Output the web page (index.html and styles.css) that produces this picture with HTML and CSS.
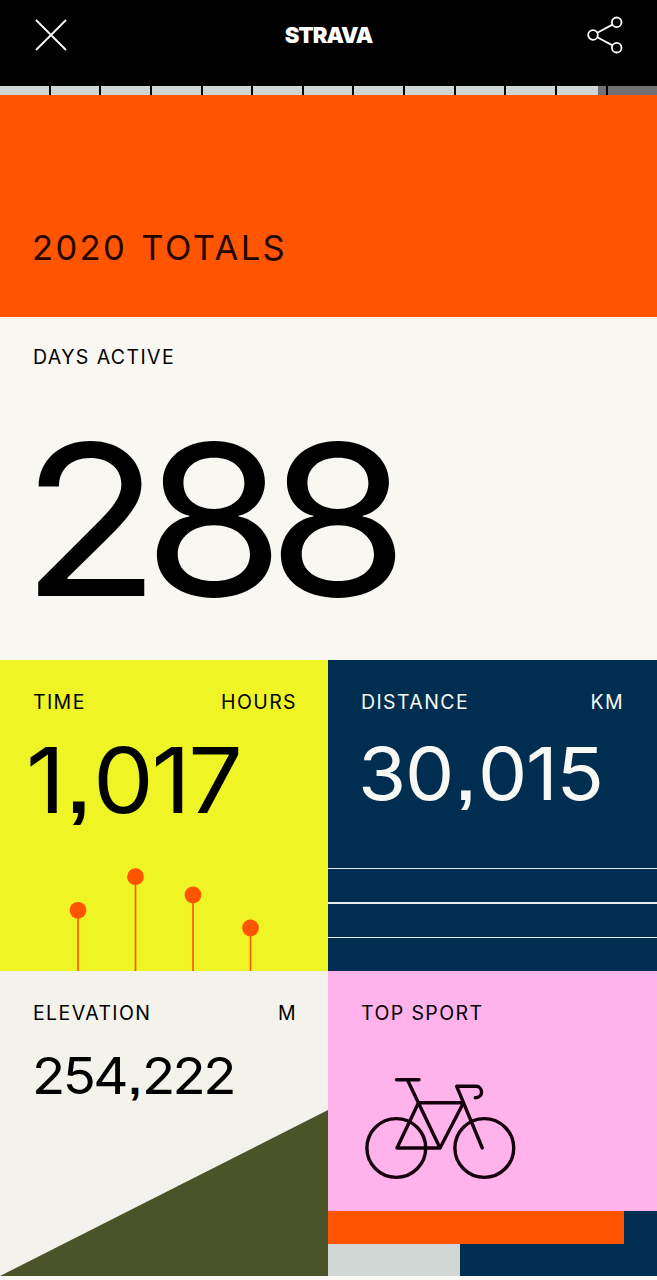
FILE: index.html
```html
<!DOCTYPE html>
<html lang="en">
	<head>
		<meta charset="utf-8">
		<title>2020 Totals</title>
		<link rel="stylesheet" href="styles.css">
	</head>
	<body>
		<header>
			<svg class="close" width="32" height="32" viewBox="0 0 32 32">
				<path d="M1 1L31 31M31 1L1 31" />
			</svg>
			<div class="logo">STRAVA</div>
			<svg class="share" width="38" height="38" viewBox="0 0 38 38">
				<circle cx="7" cy="19" r="4.8" />
				<circle cx="30.7" cy="6.3" r="4.8" />
				<circle cx="30.7" cy="31.7" r="4.8" />
				<path d="M11.3 16.7L26.5 8.6M11.3 21.3L26.5 29.4" />
			</svg>
		</header>
		<div class="progress">
			<i></i><i></i><i></i><i></i><i></i><i></i><i></i><i></i><i></i><i></i><i></i><i class="current"></i><i class="todo"></i>
		</div>
		<section class="title">
			<h1>2020 TOTALS</h1>
		</section>
		<section class="days">
			<div class="label"><span>DAYS ACTIVE</span></div>
			<div class="value">288</div>
		</section>
		<main>
			<section class="time">
				<div class="label"><span>TIME</span><span>HOURS</span></div>
				<div class="value">1<b>,</b>017</div>
				<svg class="pins" width="328" height="111" viewBox="0 0 328 111">
					<path d="M78 50V111M135.5 17V111M193 35V111M250.5 68V111" />
					<circle cx="78" cy="50.3" r="8.4" />
					<circle cx="135.5" cy="16.7" r="8.4" />
					<circle cx="193" cy="35" r="8.4" />
					<circle cx="250.5" cy="68" r="8.4" />
				</svg>
			</section>
			<section class="distance">
				<div class="label"><span>DISTANCE</span><span>KM</span></div>
				<div class="value">30<b>,</b>015</div>
				<div class="lanes"><i></i><i></i><i></i></div>
			</section>
			<section class="elevation">
				<div class="label"><span>ELEVATION</span><span>M</span></div>
				<div class="value">254<b>,</b>222</div>
				<div class="hill"></div>
			</section>
			<section class="sport">
				<div class="label"><span>TOP SPORT</span></div>
				<svg class="bike" width="156" height="106" viewBox="362 1075 156 106">
					<circle cx="396.3" cy="1148" r="29.4" />
					<circle cx="484.3" cy="1148" r="29.4" />
					<path d="M396.5 1079.8H419M407.5 1080L440 1148H397L418.5 1102.7H463.5L440 1148" />
					<path d="M482.3 1148L456.7 1086.3H476C483 1086.3 484 1097.5 475.3 1097.7" />
				</svg>
				<div class="bars">
					<div class="bar first"></div>
					<div class="bar second"></div>
				</div>
			</section>
		</main>
	</body>
</html>
```
FILE: styles.css
```css
body {
	margin: 0;
	height: 1280px;
	overflow: hidden;
	background: #fcfaf6;
	color: #000;
	font-family: Inter, "Liberation Sans", sans-serif;
	line-height: 1;
}
section {
	box-sizing: border-box;
	overflow: hidden;
}
svg {
	display: block;
	fill: none;
}
header {
	height: 86px;
	box-sizing: border-box;
	padding: 16px 33px 0 35px;
	display: flex;
	justify-content: space-between;
	background: #000;
	color: #fff;
}
.close,
.share {
	stroke: #fff;
	stroke-width: 1.8;
}
.close {
	margin-top: 3px;
}
.logo {
	margin: 8px 0 0 4px;
	font-size: 22px;
	font-weight: 900;
	letter-spacing: -0.9px;
}
.progress {
	height: 9px;
	display: flex;
	gap: 2px;
	background: #000;
}
.progress i {
	flex: 1;
	background: #d0d6d4;
}
.progress .current {
	background: linear-gradient(to right, #d0d6d4 83%, #727075 83%);
}
.progress .todo {
	flex: 0 0 49.4px;
	background: #727075;
}
.title {
	height: 222px;
	padding: 136px 33px 0 32px;
	background: #ff5400;
	color: #240600;
}
h1 {
	margin: 0;
	font-size: 34.5px;
	font-weight: 400;
	line-height: 1;
	letter-spacing: 2.4px;
	word-spacing: 2px;
}
.label {
	display: flex;
	justify-content: space-between;
	font-size: 19.5px;
	letter-spacing: 1.4px;
}
.value {
	transform-origin: 0 0;
	white-space: nowrap;
}
.value b {
	margin: 0 0.065em 0 0.055em;
	font-family: "Liberation Sans", sans-serif;
	font-size: 0.85em;
	line-height: 0;
}
.days {
	height: 343px;
	padding: 31px 33px 0;
	background: #f8f7f2;
}
.days .value {
	margin: 47px 0 0 -12px;
	font-size: 210px;
	letter-spacing: -16px;
	transform: scaleX(1.09);
}
main {
	display: grid;
	grid-template-columns: 328px 1fr;
	grid-template-rows: 311px 305px;
}
main section {
	display: flex;
	flex-direction: column;
	padding-top: 33px;
}
main .label {
	padding: 0 31px 0 33px;
}
main .distance .label {
	padding-right: 33px;
}
.time {
	background: #eff524;
}
.time .value {
	margin: 22px 0 0 26px;
	font-size: 91px;
	letter-spacing: -2.3px;
	transform: scaleX(1.06);
}
.pins {
	margin-top: auto;
	stroke: #ff5400;
	stroke-width: 1.6;
}
.pins circle {
	fill: #ff5400;
	stroke: none;
}
.distance {
	background: #002e50;
	color: #f8f8f4;
}
.distance .value {
	margin: 24px 0 0 30px;
	font-size: 73px;
	letter-spacing: -1.2px;
	transform: scaleX(1.07);
}
.lanes {
	height: 103.5px;
	margin-top: auto;
	display: flex;
	flex-direction: column;
	gap: 33px;
}
.lanes i {
	height: 1.5px;
	background: #e9eef0;
}
.elevation {
	background: #f3f2eb;
}
.elevation .value {
	margin: 26px 0 0 32px;
	font-size: 51px;
	letter-spacing: -2.4px;
	transform: scaleX(1.07);
}
.hill {
	height: 166px;
	margin-top: auto;
	background: #4b5428;
	clip-path: polygon(0 100%, 100% 0, 100% 100%);
}
.sport {
	background: #ffb3ea;
}
.bike {
	margin: 51px 0 0 34px;
	stroke: #14000c;
	stroke-width: 3.4;
	stroke-linecap: round;
	stroke-linejoin: round;
}
.bars {
	margin-top: auto;
	background: #002e50;
}
.bar {
	height: 33px;
}
.first {
	width: 90%;
	background: #ff5400;
}
.second {
	width: 40%;
	height: 32px;
	background: #cfd6d4;
}
```
